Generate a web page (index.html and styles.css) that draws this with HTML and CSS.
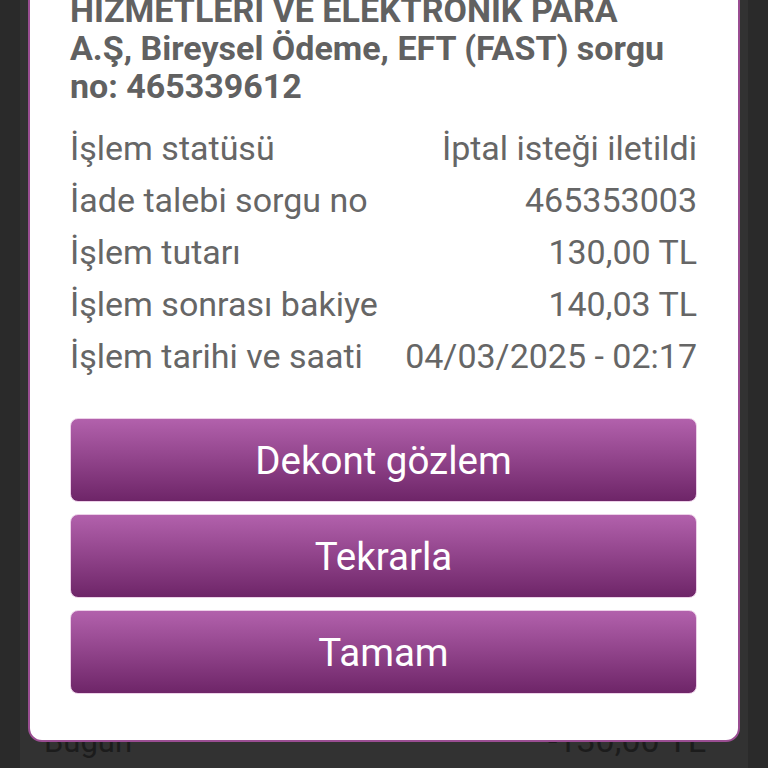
FILE: index.html
```html
<!DOCTYPE html>
<html lang="tr">
<head>
  <meta charset="UTF-8">
  <meta name="viewport" content="width=device-width, initial-scale=1.0">
  <title>İşlem detayı</title>
  <link rel="stylesheet" href="styles.css">
</head>
<body>

  <div class="page">
    <div class="history-row">
      <span class="history-day">Bugün</span>
      <span class="history-amount">-130,00 TL</span>
    </div>
  </div>

  <!-- işlem detayı penceresi -->
  <div class="dialog">
    <p class="dialog-title">HİZMETLERİ VE ELEKTRONİK PARA A.Ş, Bireysel Ödeme, EFT (FAST) sorgu no: 465339612</p>

    <div class="detail-list">
      <div class="detail-row"><span>İşlem statüsü</span><span>İptal isteği iletildi</span></div>
      <div class="detail-row"><span>İade talebi sorgu no</span><span>465353003</span></div>
      <div class="detail-row"><span>İşlem tutarı</span><span>130,00 TL</span></div>
      <div class="detail-row"><span>İşlem sonrası bakiye</span><span>140,03 TL</span></div>
      <div class="detail-row"><span>İşlem tarihi ve saati</span><span>04/03/2025 - 02:17</span></div>
    </div>

    <div class="actions">
      <button class="action-btn">Dekont gözlem</button>
      <button class="action-btn">Tekrarla</button>
      <button class="action-btn">Tamam</button>
    </div>
  </div>

</body>
</html>
```

FILE: styles.css
```css
* {
  box-sizing: border-box;
}
body {
  margin: 0;
  width: 768px;
  height: 768px;
  overflow: hidden;
  position: relative;
  background-color: #2a2a2a;
  font-family: Roboto, 'Liberation Sans', sans-serif;
}

/* arka plan sayfası */
.page {
  margin: 0 20px;
  height: 768px;
  background-color: #323232;
  display: flex;
  flex-direction: column;
  justify-content: flex-end;
}
.history-row {
  display: flex;
  justify-content: space-between;
  align-items: baseline;
  padding: 0 42px 8px 24px;
  color: #1c1c1c;
  font-size: 31px;
}
.history-amount {
  font-size: 34px;
}

/* pencere */
.dialog {
  position: absolute;
  left: 28px;
  top: -40px;
  width: 712px;
  height: 782px;
  padding: 29px 41px 0 40px;
  background-color: #fff;
  border: 2px solid #9a4e92;
  border-radius: 14px;
}
.dialog-title {
  margin: 0;
  max-width: 605px;
  font-size: 34px;
  line-height: 38px;
  font-weight: bold;
  color: #616161;
}
.detail-list {
  margin-top: 17px;
}
.detail-row {
  display: flex;
  justify-content: space-between;
  font-size: 34px;
  line-height: 52px;
  color: #666;
}
.actions {
  margin-top: 36px;
  display: flex;
  flex-direction: column;
  gap: 12px;
}
.action-btn {
  height: 84px;
  width: 100%;
  border: 1px solid #ecd0e8;
  border-radius: 8px;
  background: linear-gradient(to bottom, #b261ac, #6e2568);
  color: #fff;
  font-family: Roboto, 'Liberation Sans', sans-serif;
  font-size: 38.5px;
  cursor: pointer;
}
```
